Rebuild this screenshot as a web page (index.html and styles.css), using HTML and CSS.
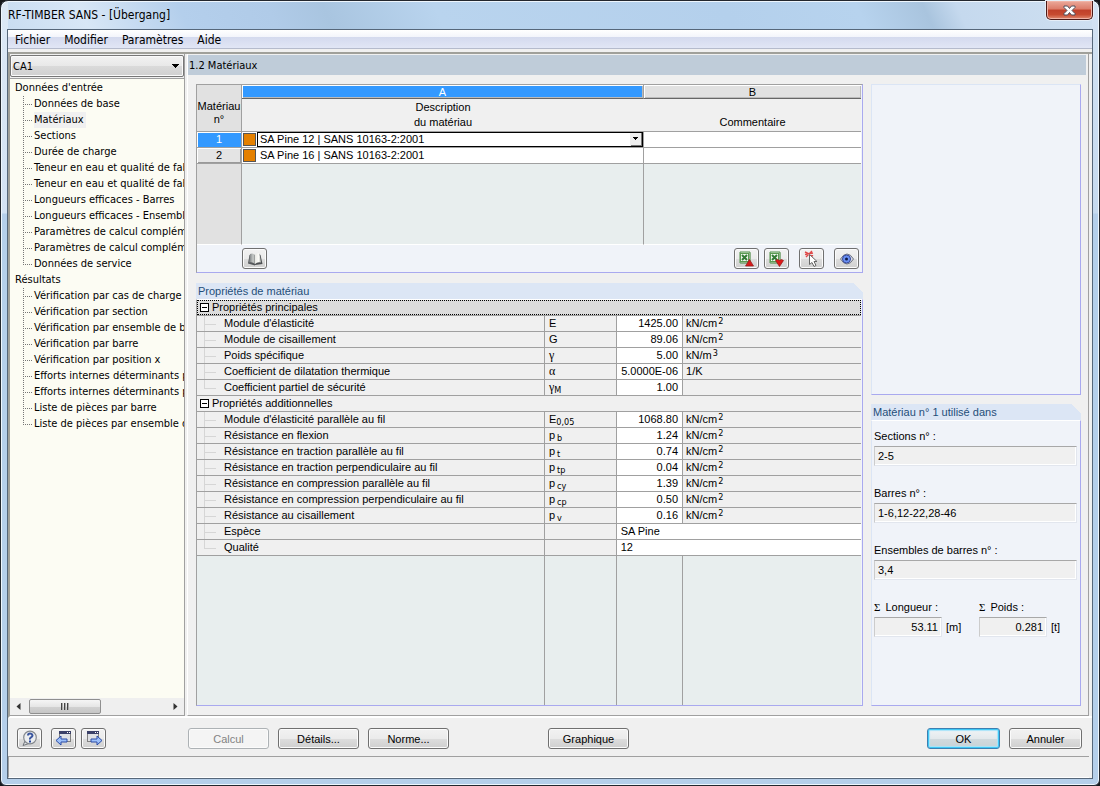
FILE: index.html
```html
<!DOCTYPE html>
<html lang="fr">
<head>
<meta charset="utf-8">
<title>RF-TIMBER SANS - [Übergang]</title>
<link rel="stylesheet" href="styles.css">
</head>
<body>
<div class="window">
  <header class="titlebar">
    <h1 class="title">RF-TIMBER SANS - [Übergang]</h1>
    <button class="close" type="button" aria-label="Fermer">
      <svg width="13" height="11" viewBox="0 0 13 11"><path d="M1 1h3.500l2 2.500L8.500 1H12v1.500L9 5.500l3 3V10H8.500l-2-2.500-2 2.500H1V8.500l3-3-3-3z" fill="#fff" stroke="#4d4f5c" stroke-width="1"/></svg>
    </button>
  </header>
  <div class="client">
    <nav class="menubar">
      <button type="button">Fichier</button>
      <button type="button">Modifier</button>
      <button type="button">Paramètres</button>
      <button type="button">Aide</button>
    </nav>
    <div class="workspace">
      <aside class="sidebar">
        <select class="case-select" aria-label="Cas"><option>CA1</option></select>
        <div class="tree">
          <div class="tree-root">Données d'entrée</div>
          <ul>
            <li>Données de base</li>
            <li><span class="current">Matériaux</span></li>
            <li>Sections</li>
            <li>Durée de charge</li>
            <li>Teneur en eau et qualité de fab</li>
            <li>Teneur en eau et qualité de fab</li>
            <li>Longueurs efficaces - Barres</li>
            <li>Longueurs efficaces - Ensemble</li>
            <li>Paramètres de calcul compléme</li>
            <li>Paramètres de calcul compléme</li>
            <li>Données de service</li>
          </ul>
          <div class="tree-root">Résultats</div>
          <ul>
            <li>Vérification par cas de charge</li>
            <li>Vérification par section</li>
            <li>Vérification par ensemble de ba</li>
            <li>Vérification par barre</li>
            <li>Vérification par position x</li>
            <li>Efforts internes déterminants p</li>
            <li>Efforts internes déterminants p</li>
            <li>Liste de pièces par barre</li>
            <li>Liste de pièces par ensemble de</li>
          </ul>
        </div>
        <div class="scrollbar">
          <button type="button" class="scroll-arrow" aria-label="Gauche"><svg width="5" height="7" viewBox="0 0 5 7"><path d="M4.500 0v7L0.500 3.500z" fill="#333"/></svg></button>
          <div class="track"><div class="thumb"><i></i><i></i><i></i></div></div>
          <button type="button" class="scroll-arrow" aria-label="Droite"><svg width="5" height="7" viewBox="0 0 5 7"><path d="M0.500 0v7l4-3.500z" fill="#333"/></svg></button>
        </div>
      </aside>
      <main class="main">
        <h2 class="page-title">1.2 Matériaux</h2>
        <div class="content">
          <div class="left-col">
            <section class="panel materials">
              <table class="mat-table">
                <colgroup><col class="c-num"><col class="c-desc"><col class="c-com"></colgroup>
                <thead>
                  <tr class="letters"><th rowspan="3" class="corner">Matériau<br>n°</th><th class="letter active">A</th><th class="letter">B</th></tr>
                  <tr class="heads"><th>Description</th><th></th></tr>
                  <tr class="heads last"><th>du matériau</th><th>Commentaire</th></tr>
                </thead>
                <tbody>
                  <tr><th class="rownum active">1</th>
                    <td><div class="mat"><span class="swatch"></span><select class="mat-select" aria-label="Matériau 1"><option>SA Pine 12 | SANS 10163-2:2001</option></select></div></td><td></td></tr>
                  <tr><th class="rownum">2</th>
                    <td><div class="mat"><span class="swatch"></span><span class="mat-name">SA Pine 16 | SANS 10163-2:2001</span></div></td><td></td></tr>
                  <tr class="filler"><th></th><td></td><td></td></tr>
                </tbody>
              </table>
              <div class="toolbar">
                <button type="button" class="btn icon" aria-label="Bibliothèque">
                  <svg width="18" height="16" viewBox="0 0 18 16"><defs><linearGradient id="pl" x1="0" x2="1"><stop offset="0" stop-color="#73777a"/><stop offset=".7" stop-color="#c9ccca"/><stop offset="1" stop-color="#8c8f8f"/></linearGradient><linearGradient id="pr" x1="0" x2="1"><stop offset="0" stop-color="#e9e9e5"/><stop offset=".6" stop-color="#fbfbf8"/><stop offset="1" stop-color="#b4b7b5"/></linearGradient></defs><path d="M2 12.500L3.500 4h1L9 12.500v2z" fill="#55585b"/><path d="M13 3l1.500 1L16.500 13 9 14v-2z" fill="#4d5053"/><path d="M3 11.500l1-8.500Q7 1.500 9 4v9Q6.500 10.500 3 11.500z" fill="url(#pl)"/><path d="M9 4Q11 1.500 13.500 2.500L15 11.500Q11.500 10.500 9 13z" fill="url(#pr)"/></svg>
                </button>
                <span class="spacer"></span>
                <button type="button" class="btn icon" aria-label="Exporter vers Excel">
                  <svg width="17" height="16" viewBox="0 0 17 16"><path d="M2 1h10v11H2z" fill="#d9ead6" stroke="#4f9048"/><path d="M12 2v10M3 12h9" stroke="#88ad83" stroke-width="1.500"/><rect x="2.500" y="2.500" width="8" height="8" fill="#f2f8f0" stroke="#5b9a53"/><path d="M4 4l5 5M9 4L4 9" stroke="#337a35" stroke-width="2"/><path d="M11.500 8.500l4 6.500h-8z" fill="#d91a1a" stroke="#8f1a1a" stroke-width=".7"/></svg>
                </button>
                <button type="button" class="btn icon" aria-label="Importer depuis Excel">
                  <svg width="17" height="16" viewBox="0 0 17 16"><path d="M2 1h10v11H2z" fill="#d9ead6" stroke="#4f9048"/><path d="M12 2v10M3 12h9" stroke="#88ad83" stroke-width="1.500"/><rect x="2.500" y="2.500" width="8" height="8" fill="#f2f8f0" stroke="#5b9a53"/><path d="M4 4l5 5M9 4L4 9" stroke="#337a35" stroke-width="2"/><path d="M7.500 9.500l2-1 2 1 2-1 2 1-4 6z" fill="#e01717" stroke="#8f1a1a" stroke-width=".7"/></svg>
                </button>
                <button type="button" class="btn icon gap-m" aria-label="Sélectionner">
                  <svg width="17" height="17" viewBox="0 0 17 17"><path d="M2 2l8 4M9 1L3 7M2 4.500l8-1.500" stroke="#e04848" stroke-width="1.400"/><path d="M6.500 4.500v10l2.500-2 2 4 2-1-2-4h3z" fill="#fff" stroke="#666" stroke-width="1"/></svg>
                </button>
                <button type="button" class="btn icon gap-m" aria-label="Afficher">
                  <svg width="16" height="12" viewBox="0 0 16 12"><path d="M1.500 6Q4.500 1 8 1t6.500 5Q11.500 11 8 11T1.500 6z" fill="#d9dce6" stroke="#6b7080"/><circle cx="7.500" cy="6" r="4" fill="#6a90f4" stroke="#34479a"/><circle cx="7.500" cy="6" r="1.500" fill="#111a48"/></svg>
                </button>
              </div>
            </section>
            <section class="group props">
              <h3 class="group-title">Propriétés de matériau</h3>
              <div class="panel props-body">
                <table class="prop-table">
                  <colgroup><col class="p-name"><col class="p-sym"><col class="p-val"><col class="p-unit"></colgroup>
                  <tbody>
                    <tr class="cat focus"><th colspan="4"><div class="cat-in"><button type="button" class="toggle" aria-label="Réduire"></button>Propriétés principales</div></th></tr>
                    <tr><th>Module d'élasticité</th><td>E</td><td class="v">1425.00</td><td>kN/cm<sup>2</sup></td></tr>
                    <tr><th>Module de cisaillement</th><td>G</td><td class="v">89.06</td><td>kN/cm<sup>2</sup></td></tr>
                    <tr><th>Poids spécifique</th><td class="greek">γ</td><td class="v">5.00</td><td>kN/m<sup>3</sup></td></tr>
                    <tr><th>Coefficient de dilatation thermique</th><td class="greek">α</td><td class="v">5.0000E-06</td><td>1/K</td></tr>
                    <tr class="end"><th>Coefficient partiel de sécurité</th><td class="greek">γ<sub>M</sub></td><td class="v">1.00</td><td></td></tr>
                    <tr class="cat"><th colspan="4"><div class="cat-in"><button type="button" class="toggle" aria-label="Réduire"></button>Propriétés additionnelles</div></th></tr>
                    <tr><th>Module d'élasticité parallèle au fil</th><td>E<sub>0,05</sub></td><td class="v">1068.80</td><td>kN/cm<sup>2</sup></td></tr>
                    <tr><th>Résistance en flexion</th><td>p<sub class="gap">b</sub></td><td class="v">1.24</td><td>kN/cm<sup>2</sup></td></tr>
                    <tr><th>Résistance en traction parallèle au fil</th><td>p<sub class="gap">t</sub></td><td class="v">0.74</td><td>kN/cm<sup>2</sup></td></tr>
                    <tr><th>Résistance en traction perpendiculaire au fil</th><td>p<sub class="gap">tp</sub></td><td class="v">0.04</td><td>kN/cm<sup>2</sup></td></tr>
                    <tr><th>Résistance en compression parallèle au fil</th><td>p<sub class="gap">cy</sub></td><td class="v">1.39</td><td>kN/cm<sup>2</sup></td></tr>
                    <tr><th>Résistance en compression perpendiculaire au fil</th><td>p<sub class="gap">cp</sub></td><td class="v">0.50</td><td>kN/cm<sup>2</sup></td></tr>
                    <tr><th>Résistance au cisaillement</th><td>p<sub class="gap">v</sub></td><td class="v">0.16</td><td>kN/cm<sup>2</sup></td></tr>
                    <tr><th>Espèce</th><td></td><td class="wide" colspan="2">SA Pine</td></tr>
                    <tr class="end"><th>Qualité</th><td></td><td class="wide" colspan="2">12</td></tr>
                    <tr class="filler"><td></td><td></td><td></td><td></td></tr>
                  </tbody>
                </table>
              </div>
            </section>
          </div>
          <div class="right-col">
            <section class="panel preview"></section>
            <section class="group usage">
              <h3 class="group-title">Matériau n° 1 utilisé dans</h3>
              <div class="panel usage-body">
                <div class="field"><label for="f1">Sections n° :</label><input id="f1" readonly value="2-5"></div>
                <div class="field"><label for="f2">Barres n° :</label><input id="f2" readonly value="1-6,12-22,28-46"></div>
                <div class="field"><label for="f3">Ensembles de barres n° :</label><input id="f3" readonly value="3,4"></div>
                <div class="pair">
                  <div class="field"><label for="f4"><span class="sigma">Σ</span>Longueur :</label><div class="with-unit"><input id="f4" class="num" readonly value="53.11"><span>[m]</span></div></div>
                  <div class="field"><label for="f5"><span class="sigma">Σ</span>Poids :</label><div class="with-unit"><input id="f5" class="num" readonly value="0.281"><span>[t]</span></div></div>
                </div>
              </div>
            </section>
          </div>
        </div>
      </main>
    </div>
    <footer class="actions">
      <div class="nav-buttons">
        <button type="button" class="btn icon help" aria-label="Aide">
          <svg width="18" height="17" viewBox="0 0 18 17"><path d="M4 11L2 15.500l6-2" fill="#dfe2e4" stroke="#70747a"/><circle cx="9" cy="7.500" r="6.300" fill="#eceef0" stroke="#85898e" stroke-width="1.200"/><path d="M7 5.500Q7 3.500 9 3.500T11.500 5.500Q11.500 6.500 10 7.300T9 9.500" fill="none" stroke="#3a569f" stroke-width="2"/><rect x="8" y="10.500" width="2" height="2" fill="#27459b"/></svg>
        </button>
        <button type="button" class="btn icon" aria-label="Précédent">
          <svg width="18" height="17" viewBox="0 0 18 17"><rect x="4.500" y="1.500" width="11" height="10" fill="#dfe1e5" stroke="#808080"/><rect x="4" y="1" width="12" height="3" fill="#3a4068"/><path d="M12 2.500h1M14 2.500h1" stroke="#fff"/><path d="M1 10.500l5-4.500v3h6v3H6v3z" fill="#9cc0fa" stroke="#2a4ba6"/></svg>
        </button>
        <button type="button" class="btn icon" aria-label="Suivant">
          <svg width="18" height="17" viewBox="0 0 18 17"><rect x="2.500" y="1.500" width="11" height="10" fill="#dfe1e5" stroke="#808080"/><rect x="2" y="1" width="12" height="3" fill="#3a4068"/><path d="M10 2.500h1M12 2.500h1" stroke="#fff"/><path d="M17 10.500L12 6v3H6v3h6v3z" fill="#9cc0fa" stroke="#2a4ba6"/></svg>
        </button>
      </div>
      <div class="main-buttons">
        <button type="button" class="btn text" disabled>Calcul</button>
        <button type="button" class="btn text">Détails...</button>
        <button type="button" class="btn text">Norme...</button>
        <button type="button" class="btn text graph">Graphique</button>
        <span class="spacer"></span>
        <button type="button" class="btn text short default">OK</button>
        <button type="button" class="btn text short">Annuler</button>
      </div>
    </footer>
    <div class="status"></div>
  </div>
</div>
</body>
</html>
```
FILE: styles.css
```css
:root {
  --ui: "DejaVu Sans Condensed", "DejaVu Sans", sans-serif;
  --grid: "Liberation Sans", Arial, sans-serif;
  --face: #f0f0f0;
  --line: #a0a0a0;
  --violet: #a9a9ef;
  --pale: #f0f3f9;
  --empty: #e8eeee;
  --blue: #3399ff;
}
* { box-sizing: border-box; }
html, body { height: 100%; margin: 0; background: #16181c; }
body { font: 11px/16px var(--ui); color: #000; }
button, select, input { font: inherit; color: inherit; margin: 0; padding: 0; border: 0; border-radius: 0; background: none; }
h1, h2, h3, ul { margin: 0; padding: 0; font: inherit; }
ul { list-style: none; }
th { font-weight: normal; text-align: left; }
svg { display: block; }
.spacer { flex: 1; }

.window {
  height: 100vh;
  min-height: 640px;
  display: flex;
  flex-direction: column;
  padding: 0 6px 6px;
  border: 1px solid #23272e;
  border-radius: 8px 8px 6px 6px;
  box-shadow: inset 0 0 0 1px #eef6fd;
  background:
    linear-gradient(180deg, #dce8f5 0, #d3e2f3 212px, transparent 213px) left / 7px 100% no-repeat,
    linear-gradient(180deg, #d3e2f3 0, #c6daef 212px, transparent 213px) right / 7px 100% no-repeat,
    linear-gradient(65deg, #c8dcf1 0, #d8e7f6 8%, #b4cfec 17%, #b0cbe8 25%, #a9c5e0 30%, #b9d4ee 40%, #b4d0ec 66%, #b7d3ee 78%, #a9c4de 84%, #c5d9ee 87%, #cfe0f1 100%) top / 100% 30px no-repeat,
    #b5cfea;
}
.titlebar { display: flex; justify-content: space-between; align-items: flex-start; height: 28px; }
.title { font-size: 12px; line-height: 28px; padding-left: 1px; }
.close {
  width: 47px; height: 19px;
  display: flex; align-items: center; justify-content: center;
  border: 1px solid #4b1a18; border-top: 0; border-radius: 0 0 5px 5px;
  box-shadow: inset 0 0 0 1px #f0b3a6, 0 0 0 1px #e6eef7;
  background: linear-gradient(#eba99b 0, #dc7b69 45%, #c0402a 50%, #c74a30 75%, #e08a70 100%);
}
.client {
  flex: 1; min-height: 0;
  display: flex; flex-direction: column;
  border: 1px solid #56677a;
  background: var(--face);
}
.menubar {
  display: flex; gap: 14px;
  height: 19px; flex: none;
  padding-left: 7px;
  background: linear-gradient(#fff 0, #f3f5fb 38%, #d4daee 40%, #e1e6f5 100%);
  border-bottom: 1px solid #b5bbcc;
}
.menubar button { font-size: 12px; line-height: 20px; }

.workspace {
  flex: 1; min-height: 0;
  display: flex; gap: 2px;
  margin-top: 3px;
  border-top: 2px solid #a0a09a;
  border-left: 2px solid #a0a09a;
  border-bottom: 2px solid #fff;
}
.sidebar {
  width: 175px; flex: none;
  display: flex; flex-direction: column;
  padding: 1px 0 0;
  border-right: 1px solid var(--line);
  border-bottom: 1px solid var(--line);
}
.case-select, .mat-select { appearance: none; }
.case-select {
  height: 22px; flex: none; width: 100%;
  padding: 1px 20px 0 2px;
  border: 1px solid #777; border-radius: 2px;
  box-shadow: inset 0 0 0 1px #fafafa;
  background:
    conic-gradient(from -45deg at 50% 100%, #000 90deg, transparent 0) right 4px center / 8px 4px no-repeat,
    linear-gradient(#f2f2f2, #e8e8e8 50%, #dadada 51%, #d0d0d0);
}
.tree {
  flex: 1; min-height: 0; overflow: hidden;
  margin-top: 1px; padding: 1px 0 0 5px;
  border-top: 1px solid var(--line);
  background: #fcfcf3;
  white-space: nowrap;
}
.tree ul { padding-left: 8px; }
.tree li {
  padding-left: 11px;
  background:
    repeating-linear-gradient(#777 0 1px, transparent 1px 2px) 0 0 / 1px 100% no-repeat,
    repeating-linear-gradient(90deg, #777 0 1px, transparent 1px 2px) 0 8px / 9px 1px no-repeat;
}
.tree li:last-child {
  background-size: 1px 8px, 9px 1px;
}
.current { background: #f0f0f0; display: inline-block; padding-right: 2px; }
.scrollbar { display: flex; height: 17px; flex: none; background: #efefef; align-items: center; }
.scroll-arrow { width: 17px; height: 17px; display: flex; align-items: center; justify-content: center; }
.track { flex: 1; padding-left: 2px; }
.thumb {
  width: 52%; height: 15px;
  display: flex; gap: 2px; align-items: center; justify-content: center;
  border: 1px solid #8f8f8f; border-radius: 2px;
  background: linear-gradient(#f5f5f5, #e6e6e6 50%, #d2d2d2 51%, #c6c6c6);
}
.thumb i { width: 1px; height: 7px; background: #444; box-shadow: 1px 0 #aaa; }

.main {
  flex: 1; min-width: 0;
  display: flex; flex-direction: column;
  margin-right: 3px; padding-right: 2px;
  border-right: 1px solid var(--line);
  border-bottom: 1px solid var(--line);
  border-left: 1px solid #fff;
}
.page-title { flex: none; margin-top: 1px; height: 20px; padding-left: 1px; line-height: 22px; background: #bfccd9; }
.content { flex: 1; min-height: 0; display: flex; gap: 8px; padding: 9px 5px 9px 8px; font-family: var(--grid); }
.left-col { flex: 1; min-width: 0; display: flex; flex-direction: column; gap: 10px; }
.right-col { width: 210px; flex: none; display: flex; flex-direction: column; gap: 9px; }
.panel { background: var(--pale); border: 1px solid var(--violet); border-top-color: #dbe5f5; border-left-color: #dbe5f5; }
.group { display: flex; flex-direction: column; }
.group-title {
  flex: none; height: 16px; line-height: 16px; padding-left: 2px;
  color: #1f4e79;
  background: linear-gradient(225deg, transparent 7px, #dce6f5 7px);
}
.group .panel { flex: 1; min-height: 0; border-top: 1px solid #fff; }

table { border-collapse: separate; border-spacing: 0; table-layout: fixed; width: 100%; }
.materials { flex: none; height: 189px; display: flex; flex-direction: column; }
.materials, .props-body { padding-right: 1px; border-left-color: var(--line); }
.materials { border-top-color: var(--line); }
.mat-table { flex: 1; }
.mat-table th, .mat-table td { padding: 0; height: 16px; line-height: 15px; border-right: 1px solid var(--line); border-bottom: 1px solid var(--line); }
.mat-table tr > :last-child { border-right: 0; }
.c-num { width: 45px; }
.c-desc { width: 402px; }
.mat-table thead th { text-align: center; }
.mat-table .corner { background: #e1e1e1; line-height: 13px; padding-top: 10px; border-right: 1px solid var(--line); }
.mat-table .letter { height: 14px; line-height: 12px; background: #e1e1e1; border-bottom: 1px solid #666; box-shadow: inset 1px 1px #fff, inset -1px -1px #bbb; }
.mat-table .active { background: var(--blue); color: #fff; }
.mat-table .heads th { background: var(--face); border-bottom: 0; border-right: 0; }
.mat-table .heads.last th { border-bottom: 1px solid var(--line); height: 17px; padding-bottom: 1px; }
.mat-table td { background: #fff; }
.mat-table .rownum { text-align: center; background: #e4e4e4; box-shadow: inset 1px 1px #fff, inset -1px -1px #999; }
.mat-table .rownum.active { background: var(--blue); box-shadow: inset 1px 1px #fff; }
.mat-table .filler > * { height: auto; border-bottom-color: #fff; background: var(--empty); }
.mat-table .filler th { background: #e1e1e1; }
.mat { display: flex; align-items: center; height: 15px; }
.swatch { width: 13px; height: 13px; margin: 0 1px; flex: none; background: #e48000; border: 1px solid #555; }
.mat-name { padding-left: 3px; }
.mat-select {
  flex: 1; min-width: 0; height: 15px; line-height: 13px; padding-left: 2px;
  border: 1px solid #000; outline: 0;
  background:
    linear-gradient(#000, #000) right 4px top 4px / 5px 1px no-repeat,
    linear-gradient(#000, #000) right 5px top 5px / 3px 1px no-repeat,
    linear-gradient(#000, #000) right 6px top 6px / 1px 1px no-repeat,
    linear-gradient(#777, #777) right 0 top 0 / 1px 100% no-repeat,
    linear-gradient(#777, #777) right 0 bottom 0 / 11px 1px no-repeat,
    linear-gradient(#eee, #eee) right 0 top 0 / 12px 100% no-repeat,
    #fff;
}
.toolbar { height: 27px; flex: none; display: flex; align-items: center; gap: 5px; padding: 0 2px 0 45px; }
.gap-m { margin-left: 5px; }

.btn {
  display: flex; align-items: center; justify-content: center;
  height: 21px;
  border: 1px solid #707070; border-radius: 3px;
  box-shadow: inset 0 0 0 1px #fbfbfb;
  background: linear-gradient(#f2f2f2, #ebebeb 50%, #dddddd 51%, #cfcfcf);
}
.btn.icon { width: 25px; flex: none; }
.btn.text { width: 81px; font-family: var(--grid); }
.btn.short { width: 73px; }
.btn:disabled { color: #838383; border-color: #adb2b5; background: #f4f4f4; }
.btn.default { border-color: #3c7fb1; box-shadow: inset 0 0 0 1px #3fc8f5, inset 0 0 1px 2px #a8e4fa; background: linear-gradient(#f0f4f6, #e3e9ec 50%, #d1dade 51%, #c9d2d6); }

.props { flex: 1; min-height: 0; }
.prop-table { height: 100%; background: var(--face); }
.prop-table th, .prop-table td { height: 16px; padding: 0 0 0 4px; line-height: 15px; border-right: 1px solid var(--line); border-bottom: 1px solid var(--line); white-space: nowrap; overflow: hidden; }
.prop-table tr > :last-child { border-right: 0; padding-left: 3px; }
.p-name { width: 52.4%; }
.p-sym { width: 10.8%; }
.p-val { width: 10%; }
.prop-table th {
  padding-left: 27px;
  background:
    linear-gradient(#d6d6d6, #d6d6d6) 7px 0 / 1px 100% no-repeat,
    linear-gradient(#d6d6d6, #d6d6d6) 7px 8px / 12px 1px no-repeat;
}
.prop-table .end th { background-size: 1px 8px, 12px 1px; }
.prop-table .cat > th { padding: 0; background: none; }
.cat-in { display: flex; align-items: center; gap: 3px; height: 15px; padding-left: 3px; }
.focus .cat-in { background: #dcdcdc; outline: 1px dotted #000; outline-offset: -1px; }
.toggle { width: 9px; height: 9px; flex: none; border: 1px solid #000; background: linear-gradient(#000, #000) center / 5px 1px no-repeat #fff; }
.prop-table .v { background: #fff; text-align: right; padding-right: 4px; }
.prop-table tr > .wide { background: #fff; padding-left: 4px; }
.prop-table .greek { font-family: "Liberation Serif", serif; font-size: 12px; }
sub, sup { font: 9px/1 var(--ui); }
sub { vertical-align: -2px; }
sup { vertical-align: 3px; padding-left: 1px; }
.gap { padding-left: 2px; }
.prop-table .filler td { height: auto; background: var(--empty); border-bottom: 0; }

.preview { flex: 311; }
.usage { flex: 303; }
.group .usage-body { border-left-color: #dbe5f5; padding: 7px 3px 0 2px; display: flex; flex-direction: column; gap: 19px; }
.field { display: flex; flex-direction: column; gap: 2px; }
.field input { width: 100%; height: 20px; padding: 0 3px 1px; background: var(--face); border: 1px solid #e2e6ee; border-top: 1px solid #a8a8a8; border-left-color: #ccc; box-shadow: inset -1px -1px #fff; }
.pair { display: flex; gap: 12px; }
.pair .field { width: 93px; }
.with-unit { display: flex; gap: 4px; align-items: center; }
.with-unit input { width: 68px; }
.with-unit .num { text-align: right; }
.sigma { font-family: "Liberation Serif", serif; margin-right: 5px; }

.actions { display: flex; flex: none; padding: 10px 10px 7px 9px; }
.nav-buttons { display: flex; gap: 5px; width: 171px; flex: none; }
.help { margin-right: 4px; }
.main-buttons { flex: 1; display: flex; gap: 9px; }
.graph { margin-left: 90px; }
.status { flex: none; height: 22px; margin-right: 3px; border-top: 1px solid var(--line); border-left: 1px solid var(--line); border-bottom: 1px solid #fff; }
```
